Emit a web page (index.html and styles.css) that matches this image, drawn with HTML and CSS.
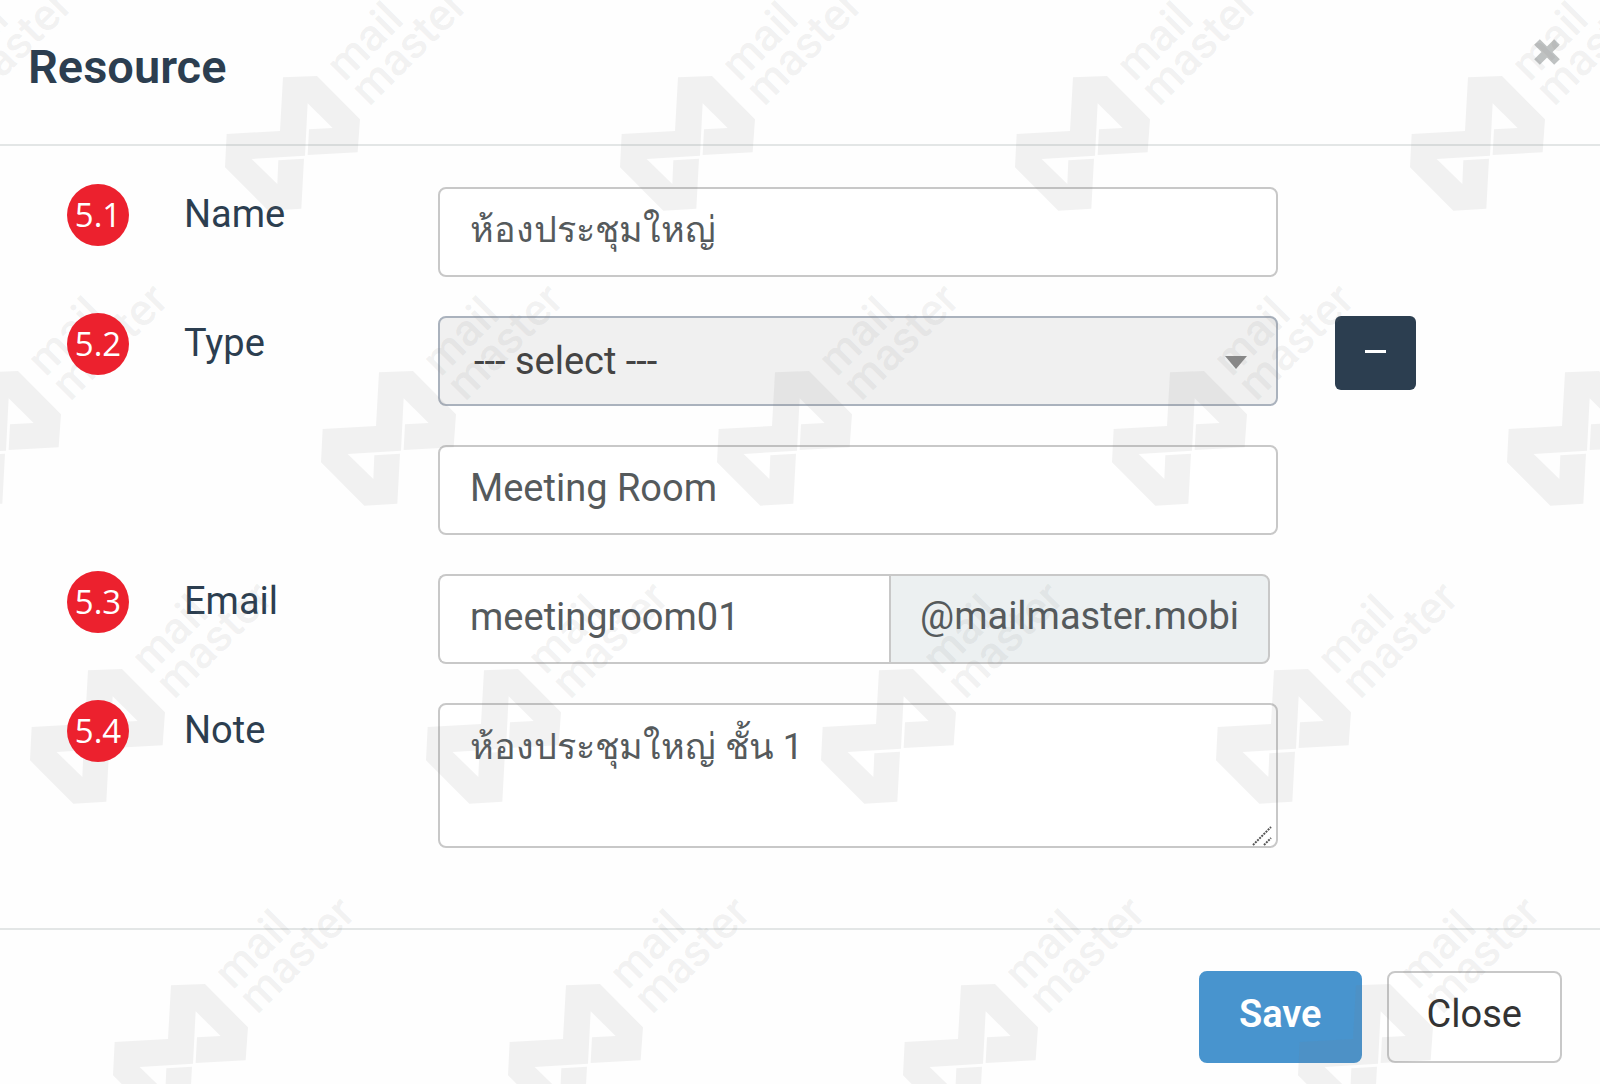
FILE: index.html
```html
<!DOCTYPE html>
<html lang="en">
<head>
    <meta charset="UTF-8">
    <meta name="viewport" content="width=device-width, initial-scale=1.0">
    <title>Resource</title>
    <link rel="stylesheet" href="styles.css">
</head>
<body>
    <div class="modal" role="dialog" aria-labelledby="modal-title">
        <div class="modal-header">
            <h1 id="modal-title">Resource</h1>
            <button type="button" class="dismiss" aria-label="Dismiss">
                <svg width="28" height="28" viewBox="0 0 28 28"><path d="M4 4L24 24M24 4L4 24"/></svg>
            </button>
        </div>

        <form class="modal-form">
            <div class="modal-body">
                <div class="row">
                    <span class="badge">5.1</span>
                    <label for="name">Name</label>
                    <input type="text" id="name" class="control thai" value="ห้องประชุมใหญ่">
                </div>

                <div class="row">
                    <span class="badge">5.2</span>
                    <label for="type">Type</label>
                    <div class="select-wrap">
                        <select id="type" class="control">
                            <option>--- select ---</option>
                        </select>
                        <svg class="caret" width="22" height="13" viewBox="0 0 22 13"><path d="M0 0H22L11 13Z"/></svg>
                    </div>
                    <button type="button" class="btn-minus" aria-label="Remove type">
                        <svg width="21" height="3" viewBox="0 0 21 3"><path d="M0 0H21V3H0Z"/></svg>
                    </button>
                </div>

                <div class="row">
                    <input type="text" class="control" aria-label="New type" value="Meeting Room">
                </div>

                <div class="row">
                    <span class="badge">5.3</span>
                    <label for="email">Email</label>
                    <div class="input-group">
                        <input type="text" id="email" class="control" value="meetingroom01">
                        <span class="addon">@mailmaster.mobi</span>
                    </div>
                </div>

                <div class="row">
                    <span class="badge">5.4</span>
                    <label for="note">Note</label>
                    <div class="note-wrap">
                        <textarea id="note" class="control thai">ห้องประชุมใหญ่ ชั้น 1</textarea>
                        <svg class="grip" width="20" height="20" viewBox="0 0 20 20"><path d="M1 19L19 1M12 19L19 12"/></svg>
                    </div>
                </div>
            </div>

            <div class="modal-footer">
                <button type="submit" class="btn btn-save">Save</button>
                <button type="button" class="btn btn-close">Close</button>
            </div>
        </form>

        <!-- watermark -->
        <svg class="watermark" aria-hidden="true">
            <defs>
                <g id="mark">
                    <g transform="scale(.3333) translate(-75 -228)">
                        <path d="M249 232L351 228L480 358L473 457L323 465L327 388L398 384L323 310L315 467L155 477L232 552L235 481L312 476L304 626L205 632L75 502L80 402L240 393Z"/>
                        <text transform="translate(434 248) rotate(-45)">mail</text>
                        <text transform="translate(508 322) rotate(-45)">master</text>
                    </g>
                </g>
            </defs>
            <use href="#mark" x="-170" y="76"/>
            <use href="#mark" x="225" y="76"/>
            <use href="#mark" x="620" y="76"/>
            <use href="#mark" x="1015" y="76"/>
            <use href="#mark" x="1410" y="76"/>
            <use href="#mark" x="-74" y="371"/>
            <use href="#mark" x="321" y="371"/>
            <use href="#mark" x="717" y="371"/>
            <use href="#mark" x="1112" y="371"/>
            <use href="#mark" x="1507" y="371"/>
            <use href="#mark" x="30" y="669"/>
            <use href="#mark" x="426" y="669"/>
            <use href="#mark" x="821" y="669"/>
            <use href="#mark" x="1216" y="669"/>
            <use href="#mark" x="113" y="984"/>
            <use href="#mark" x="508" y="984"/>
            <use href="#mark" x="903" y="984"/>
            <use href="#mark" x="1298" y="984"/>
        </svg>
    </div>
</body>
</html>
```
FILE: styles.css
```css
* {
    box-sizing: border-box;
}
body {
    margin: 0;
    background: #fefefe;
    color: #2c3e50;
    font-family: Roboto, "Liberation Sans", sans-serif;
    font-size: 38px;
}
button, input, select, textarea {
    font: inherit;
    margin: 0;
}
svg {
    display: block;
}
.modal {
    position: relative;
    min-height: 100vh;
    overflow: hidden;
}
.modal-header {
    display: flex;
    justify-content: space-between;
    align-items: flex-start;
    padding: 38px 39px 48px 28px;
    border-bottom: 2px solid #e3e6e6;
}
h1 {
    margin: 0;
    font-size: 47px;
    font-weight: 600;
    line-height: 58px;
}
.dismiss {
    padding: 0;
    border: 0;
    background: none;
}
.dismiss path {
    stroke: #bfc2c2;
    stroke-width: 8;
}
.modal-body {
    display: grid;
    gap: 39px;
    padding: 41px 0 80px 67px;
}
.row {
    display: grid;
    grid-template-columns: 117px 254px minmax(0, 1fr) 322px;
    align-items: start;
}
.row > .control {
    grid-column: 3;
}
.badge {
    position: relative;
    z-index: 2;
    width: 62px;
    height: 62px;
    margin-top: -3px;
    border-radius: 50%;
    background: #ec212e;
    color: #ffffff;
    font-family: "Open Sans", "Noto Sans", sans-serif;
    font-size: 33px;
    line-height: 62px;
    text-align: center;
}
label {
    line-height: 55px;
}
.control {
    display: block;
    width: 100%;
    height: 90px;
    padding: 0 30px 5px;
    border: 2px solid #c8c8c8;
    border-radius: 8px;
    background: #ffffff;
    color: #555a5c;
}
.thai {
    font-size: 36px;
}
.select-wrap, .note-wrap {
    position: relative;
}
select.control {
    padding: 0 34px;
    border-color: #aab2bd;
    background: #f0f0f0;
    color: #444444;
    appearance: none;
}
.caret {
    position: absolute;
    top: 40px;
    right: 31px;
    fill: #888888;
}
.btn-minus {
    display: flex;
    justify-content: center;
    width: 81px;
    height: 74px;
    margin-left: 57px;
    padding: 0 0 4px;
    align-items: center;
    border: 0;
    border-radius: 6px;
    background: #2c3e50;
}
.btn-minus path {
    fill: #ffffff;
}
.input-group {
    display: flex;
    margin-right: 8px;
}
.input-group .control {
    flex: 1;
    min-width: 0;
    border-right: 0;
    border-radius: 8px 0 0 8px;
}
.addon {
    padding: 0 29px;
    border: 2px solid #c8c8c8;
    border-radius: 0 8px 8px 0;
    background: #ecf0f1;
    color: #555a5c;
    line-height: 81px;
}
textarea.control {
    height: 145px;
    padding: 16px 30px;
    line-height: 52px;
    resize: none;
}
.grip {
    position: absolute;
    right: 6px;
    bottom: 2px;
    fill: none;
    stroke: #555555;
    stroke-width: 2;
    stroke-dasharray: 2 1;
}
.modal-footer {
    display: flex;
    justify-content: flex-end;
    gap: 25px;
    padding: 41px 38px 21px;
    border-top: 2px solid #e3e6e6;
}
.btn {
    height: 92px;
    padding: 0 38px 6px;
    border: 2px solid #c8c8c8;
    border-radius: 8px;
    background: #ffffff;
    color: #333333;
}
.btn-save {
    border-color: #4894ce;
    background: #4894ce;
    color: #ffffff;
    font-weight: 600;
}
.watermark {
    position: absolute;
    z-index: 1;
    top: 0;
    left: 0;
    width: 100%;
    height: 100%;
    fill: #808080;
    fill-opacity: 0.1;
    font-size: 135px;
    font-weight: 500;
    pointer-events: none;
}
```
